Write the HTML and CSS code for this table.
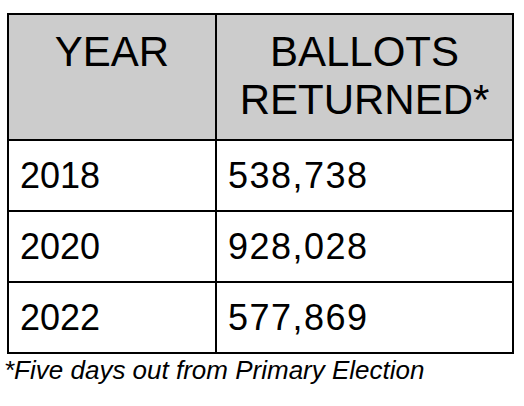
FILE: index.html
```html
<!DOCTYPE html>
<html lang="en">
<head>
<meta charset="utf-8">
<title>Ballots Returned</title>
<link rel="stylesheet" href="styles.css">
</head>
<body>
<main class="page">
  <div class="ballot-table" role="table">
    <div class="cell head" role="columnheader">YEAR</div>
    <div class="cell head" role="columnheader">BALLOTS<br>RETURNED*</div>
    <div class="cell body" role="cell">2018</div>
    <div class="cell body amount" role="cell">538,738</div>
    <div class="cell body" role="cell">2020</div>
    <div class="cell body amount" role="cell">928,028</div>
    <div class="cell body" role="cell">2022</div>
    <div class="cell body amount" role="cell">577,869</div>
  </div>
  <p class="note">*Five days out from Primary Election</p>
</main>
</body>
</html>
```

FILE: styles.css
```css
html, body {
  margin: 0;
  padding: 0;
  background: #ffffff;
}

.page {
  display: flex;
  flex-direction: column;
  align-items: flex-start;
  padding: 13px 0 0 7px;
  font-family: "Liberation Sans", Arial, sans-serif;
  color: #000000;
}

.ballot-table {
  display: grid;
  grid-template-columns: 206px 295px;
  grid-template-rows: 124px 69px 69px 69px;
  gap: 2px;
  padding: 2px;
  background: #000000;
}

.cell {
  background: #ffffff;
}

.head {
  background: #cccccc;
  font-size: 42px;
  line-height: 48px;
  text-align: center;
  padding-top: 13px;
}

.body {
  display: flex;
  align-items: center;
  font-size: 36px;
  padding-left: 11px;
}

.amount {
  letter-spacing: 1.5px;
}

.note {
  margin: 1px 0 0 -3px;
  font-size: 26px;
  font-style: italic;
  line-height: 30px;
}
```
